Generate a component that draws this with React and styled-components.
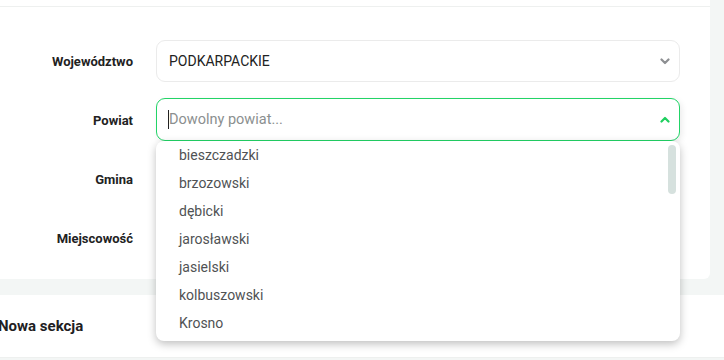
import React from "react";
import styled, { createGlobalStyle } from "styled-components";

const Global = createGlobalStyle`
  html, body { margin: 0; padding: 0; }
  body {
    background: #f3f6f5;
    font-family: Roboto, "Liberation Sans", sans-serif;
    width: 724px;
    height: 360px;
    overflow: hidden;
  }
`;

const Page = styled.div`
  width: 724px;
  display: flex;
  flex-direction: column;
`;

const Card = styled.div`
  width: 710px;
  background: #fff;
  border-bottom-right-radius: 6px;
  display: flex;
  flex-direction: column;
`;

const TopStrip = styled.div`
  height: 6px;
  border-bottom: 1px solid #eef0ef;
`;

const Form = styled.div`
  display: grid;
  grid-template-columns: 133px 524px;
  column-gap: 23px;
  row-gap: 17px;
  grid-auto-rows: 42px;
  padding: 33px 0 20px 0;
  align-items: center;
`;

const Label = styled.label`
  text-align: right;
  font-size: 13px;
  font-weight: 700;
  color: #222;
`;

const FieldWrap = styled.div`
  position: relative;
  height: ${p => (p.$open ? 43 : 42)}px;
  margin-top: ${p => (p.$open ? -1 : 0)}px;
`;

const Field = styled.div`
  box-sizing: border-box;
  height: 100%;
  display: flex;
  align-items: center;
  padding: 0 9px 0 12px;
  border: 1px solid ${p => (p.$active ? "#22d467" : "#ebebeb")};
  border-radius: 9px;
  background: #fff;
  box-shadow: ${p => (p.$active ? "2px 2px 6px rgba(0,0,0,0.08)" : "none")};
  font-size: 14px;
`;

const Value = styled.span`
  flex: 1;
  color: #222;
`;

const Placeholder = styled.span`
  flex: 1;
  color: #8b8f8f;
  font-size: 14.5px;
  display: flex;
  align-items: center;
`;

const Caret = styled.span`
  display: inline-block;
  width: 1px;
  height: 19px;
  background: #222;
  margin-left: -1px;
`;

const Chevron = ({ up, color }) => (
  <svg width="10" height="7" viewBox="0 0 10 7">
    <path
      d={up ? "M1.5 5.5 L5 2 L8.5 5.5" : "M1.5 1.5 L5 5 L8.5 1.5"}
      fill="none"
      stroke={color}
      strokeWidth="2.2"
      strokeLinecap="round"
      strokeLinejoin="round"
    />
  </svg>
);

const Menu = styled.ul`
  position: absolute;
  top: 43px;
  left: 0;
  width: 524px;
  height: 200px;
  box-sizing: border-box;
  margin: 0;
  padding: 0;
  list-style: none;
  background: #fff;
  border-radius: 8px;
  box-shadow: 0 3px 8px rgba(0, 0, 0, 0.25);
  z-index: 10;
  overflow: hidden;
`;

const Item = styled.li`
  height: 28px;
  line-height: 28px;
  padding-left: 23px;
  font-size: 14px;
  color: #505254;
`;

const Thumb = styled.div`
  position: absolute;
  top: 4px;
  right: 4px;
  width: 8px;
  height: 49px;
  border-radius: 4px;
  background: #d6e1de;
`;

const Gap = styled.div`
  height: 16px;
`;

const Section = styled.div`
  background: #fff;
  height: 62px;
  border-bottom: 1px solid #eef0ef;
  display: flex;
  align-items: center;
`;

const SectionTitle = styled.h2`
  margin: 0 0 0 -2px;
  font-size: 15px;
  font-weight: 700;
  color: #1e2022;
`;

const items = [
  "bieszczadzki",
  "brzozowski",
  "dębicki",
  "jarosławski",
  "jasielski",
  "kolbuszowski",
  "Krosno",
];

export default function App() {
  return (
    <Page>
      <Global />
      <Card>
        <TopStrip />
        <Form>
          <Label>Województwo</Label>
          <FieldWrap>
            <Field>
              <Value>PODKARPACKIE</Value>
              <Chevron color="#8d8f92" />
            </Field>
          </FieldWrap>

          <Label>Powiat</Label>
          <FieldWrap $open>
            <Field $active>
              <Placeholder>
                <Caret />
                Dowolny powiat...
              </Placeholder>
              <Chevron up color="#1fcf5f" />
            </Field>
            <Menu>
              {items.map(i => (
                <Item key={i}>{i}</Item>
              ))}
              <Thumb />
            </Menu>
          </FieldWrap>

          <Label>Gmina</Label>
          <div />

          <Label>Miejscowość</Label>
          <div />
        </Form>
      </Card>
      <Gap />
      <Section>
        <SectionTitle>Nowa sekcja</SectionTitle>
      </Section>
    </Page>
  );
}
